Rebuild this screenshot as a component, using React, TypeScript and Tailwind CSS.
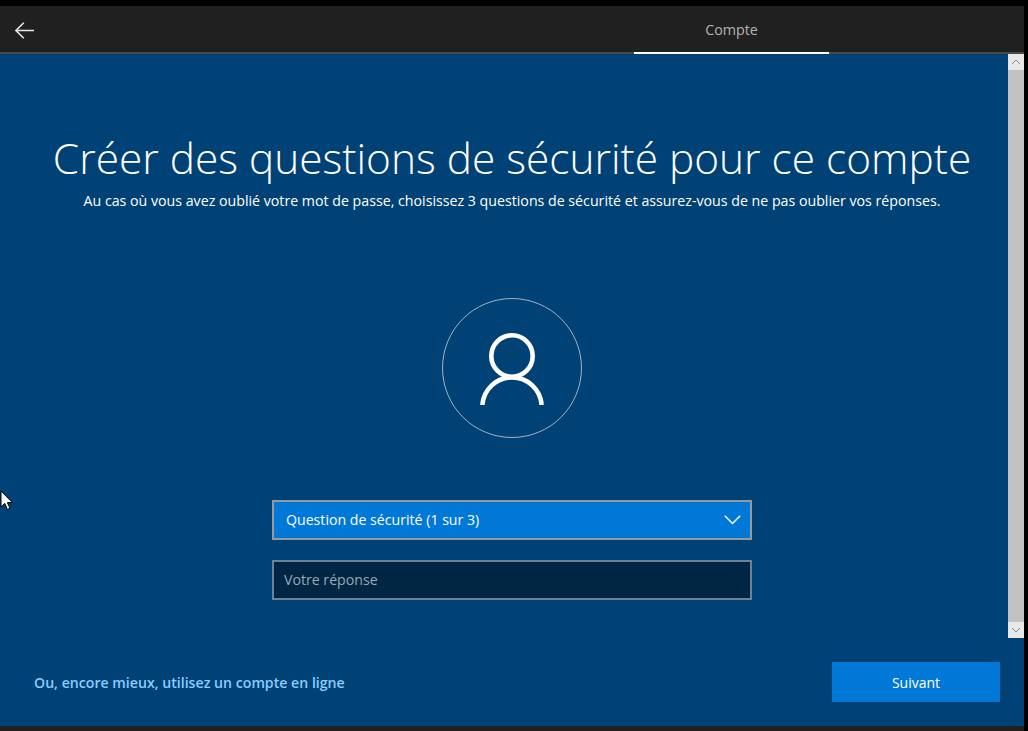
const font = { fontFamily: '"Open Sans", "Noto Sans", sans-serif' }

function Scrollbar() {
  return (
    <div className="absolute top-0 right-0 flex h-[584px] w-4 flex-col bg-[#c2c2c2]">
      <div className="flex h-4 items-center justify-center bg-[#e8e8e8]">
        <svg width="10" height="6" viewBox="0 0 10 6" fill="none" stroke="#8a8a8a">
          <path d="M1 5 L5 1 L9 5" />
        </svg>
      </div>
      <div className="flex-1" />
      <div className="flex h-4 items-center justify-center bg-[#e8e8e8]">
        <svg width="10" height="6" viewBox="0 0 10 6" fill="none" stroke="#8a8a8a">
          <path d="M1 1 L5 5 L9 1" />
        </svg>
      </div>
    </div>
  )
}

export default function App() {
  return (
    <div className="flex h-[731px] w-[1028px] flex-col overflow-hidden bg-black pt-[6px] pr-1" style={font}>
      {/* barre du haut */}
      <header className="flex h-[48px] shrink-0 border-b-2 border-[#4a4a4a] bg-[#202020]">
        <button className="flex h-[46px] w-[48px] items-center justify-center pt-[2px]">
          <svg width="19" height="17" viewBox="0 0 19 17" fill="none" stroke="#e6e6e6" strokeWidth="1.6">
            <path d="M1 8.5 H19 M8.8 0.8 L1 8.5 L8.8 16.2" />
          </svg>
        </button>
        <div className="ml-[586px] -mb-[2px] flex w-[195px] items-center justify-center border-b-2 border-white pt-[2px] text-[14.3px] text-[#b4b4b4]">
          Compte
        </div>
      </header>

      <main className="relative flex min-h-0 flex-1 flex-col items-center bg-[#004275]">
        <h1 className="mt-[72px] whitespace-nowrap text-[42.4px] leading-[64px] font-light text-white">
          Créer des questions de sécurité pour ce compte
        </h1>
        <p className="mt-px whitespace-nowrap text-[14.2px] leading-[20px] text-white">
          Au cas où vous avez oublié votre mot de passe, choisissez 3 questions de sécurité et assurez-vous de ne pas oublier vos réponses.
        </p>

        <div className="mt-[87px] flex h-[140px] w-[140px] items-center justify-center rounded-full border border-[#9db4c7] pt-[2px]">
          <svg width="64" height="72" viewBox="0 0 64 72" fill="none" stroke="white" strokeWidth="4.6">
            <circle cx="32" cy="23" r="20.7" />
            <path d="M2.37 72 A29.7 29.7 0 0 1 61.63 72" />
          </svg>
        </div>

        <div className="mt-[62px] flex h-10 w-[480px] items-center justify-between border-2 border-[#999999] bg-[#0078d7] pr-[9px] pb-px pl-3 text-[14.15px] text-white">
          <span>Question de sécurité (1 sur 3)</span>
          <svg width="17" height="10" viewBox="0 0 17 10" fill="none" stroke="white" strokeWidth="1.5">
            <path d="M0.8 0.8 L8.5 8.5 L16.2 0.8" />
          </svg>
        </div>
        <div className="mt-5 flex h-10 w-[480px] items-center border-2 border-[#6d8296] bg-[#002644] pb-px pl-[10px] text-[14.15px] text-[#9aa8b5]">
          Votre réponse
        </div>

        <div className="mt-auto mb-[24px] flex w-full items-center justify-between pr-6 pl-[34px]">
          <a className="pt-[2px] text-[14.15px] font-semibold text-[#8accff]">Ou, encore mieux, utilisez un compte en ligne</a>
          <button className="h-10 w-[168px] bg-[#0078d7] text-[14px] text-white">Suivant</button>
        </div>

        <Scrollbar />

        {/* curseur */}
        <svg className="absolute top-[436px] left-0" width="13" height="21" viewBox="0 0 13 21">
          <path d="M1 1 V17 L4.8 13.4 L7.4 19.5 L10 18.3 L7.4 12.6 H12.4 Z" fill="white" stroke="black" />
        </svg>
      </main>

      <div className="h-[5px] shrink-0 bg-[#202020]" />
    </div>
  )
}
